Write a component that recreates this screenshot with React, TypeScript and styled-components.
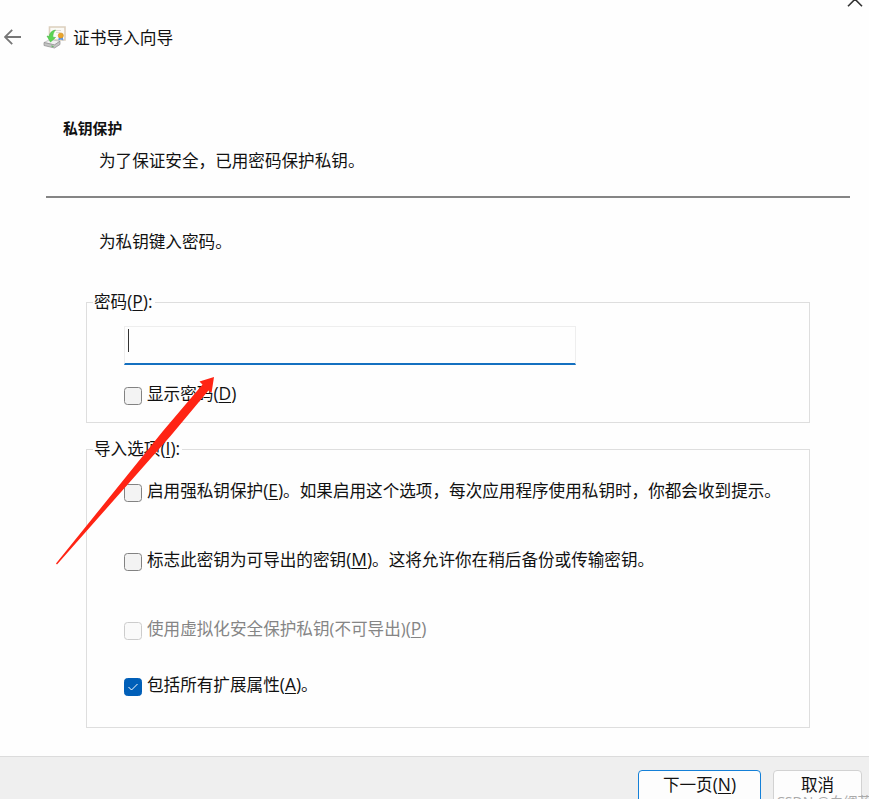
import React from "react";
import styled, { createGlobalStyle, css } from "styled-components";

const Global = createGlobalStyle`
  * { box-sizing: border-box; }
  html, body { margin: 0; overflow: hidden; background: #fff; }
`;

const Dialog = styled.main`
  position: relative;
  display: flex;
  flex-direction: column;
  width: 869px;
  height: 799px;
  overflow: hidden;
  background: #fefefe;
  color: #111;
  font: 16.6px/24px "Open Sans", "Noto Sans CJK SC", sans-serif;
  white-space: nowrap;
`;

const TitleBar = styled.header`
  display: flex;
  align-items: flex-start;
  height: 57px;
`;

const BackIcon = styled.svg`
  width: 18px;
  height: 16px;
  margin: 29px 0 0 4px;
  fill: none;
  stroke: #777;
  stroke-width: 1.8;
`;

const CertIcon = styled.svg`
  width: 24px;
  height: 24px;
  margin: 25px 0 0 21px;
`;

const Title = styled.h1`
  margin: 26px 0 0 6px;
  font-size: 16.7px;
  font-weight: 400;
  line-height: 24px;
`;

const CloseIcon = styled.svg`
  width: 16px;
  height: 8px;
  margin-left: auto;
  margin-right: 6px;
  fill: none;
  stroke: #333;
  stroke-width: 1.6;
`;

const Heading = styled.section`
  height: 141px;
  margin: 0 19px 0 46px;
  padding: 59px 0 0 17px;
  border-bottom: 2px solid #858585;
`;

const HeadingTitle = styled.h2`
  margin: 0;
  font-size: 14.8px;
  font-weight: 700;
  line-height: 24px;
`;

const HeadingText = styled.p`
  margin: 9px 0 0 36px;
`;

const Prompt = styled.p`
  height: 24px;
  margin: 32px 0 0 99px;
`;

const Group = styled.fieldset<{ $height: number; $top: number }>`
  display: flex;
  flex-direction: column;
  align-items: flex-start;
  width: 724px;
  min-width: 0;
  height: ${(p) => p.$height}px;
  margin: ${(p) => p.$top}px 0 0 86px;
  padding: 0 0 0 37px;
  border: 1px solid #dedede;
`;

const Legend = styled.legend`
  height: 24px;
  margin-left: -31px;
  padding: 0 2px 0 1px;
`;

const Mnemonic = styled.span`
  font-size: 17.4px;
  line-height: 1;
`;

const Key = styled.span`
  text-decoration: underline;
  text-decoration-thickness: 1px;
  text-underline-offset: 2px;
`;

const PasswordField = styled.div`
  width: 452px;
  height: 39px;
  margin-top: 12px;
  padding: 2px 0 0 3px;
  border: 1px solid #eee;
  border-bottom: 2px solid #1470c0;
`;

const Caret = styled.span`
  display: block;
  width: 1px;
  height: 23px;
  background: #333;
`;

const Option = styled.label<{ $top: number; $disabled?: boolean }>`
  display: flex;
  align-items: flex-start;
  gap: 5px;
  height: 24px;
  margin-top: ${(p) => p.$top}px;
  color: ${(p) => (p.$disabled ? "#858585" : "#111")};
`;

const Box = styled.span<{ $checked?: boolean; $disabled?: boolean }>`
  display: flex;
  align-items: center;
  justify-content: center;
  flex: none;
  width: 18px;
  height: 18px;
  margin-top: 5px;
  border: 1px solid #828282;
  border-radius: 3.5px;
  background: #f3f3f3;
  ${(p) => p.$disabled && css`
    border-color: #ccc;
    background: #fafafa;
  `}
  ${(p) => p.$checked && css`
    border-color: #005fb8;
    background: #005fb8;
  `}
`;

const Footer = styled.footer`
  display: flex;
  align-items: flex-start;
  justify-content: flex-end;
  gap: 12px;
  height: 43px;
  margin-top: auto;
  padding: 13px 7px 0 0;
  border-top: 1px solid #dcdcdc;
  background: #efefef;
`;

const Button = styled.button<{ $width: number; $primary?: boolean }>`
  flex: none;
  width: ${(p) => p.$width}px;
  height: 34px;
  padding: 0 0 4px;
  border: 1px solid ${(p) => (p.$primary ? "#1480d8" : "#d2d2d2")};
  border-radius: 4px;
  background: #fdfdfd;
  color: #111;
  font: inherit;
`;

const Watermark = styled.span`
  position: absolute;
  left: 776px;
  top: 793px;
  color: #aaa;
  font-size: 14px;
  line-height: 18px;
`;

const Pointer = styled.svg`
  position: absolute;
  left: 50px;
  top: 370px;
  width: 170px;
  height: 200px;
`;

type OptionData = { before: string; letter: string; after?: string; top: number; checked?: boolean; disabled?: boolean };

const importOptions: OptionData[] = [
  { before: "启用强私钥保护", letter: "E", after: "。如果启用这个选项，每次应用程序使用私钥时，你都会收到提示。", top: 18 },
  { before: "标志此密钥为可导出的密钥", letter: "M", after: "。这将允许你在稍后备份或传输密钥。", top: 45 },
  { before: "使用虚拟化安全保护私钥(不可导出)", letter: "P", top: 45, disabled: true },
  { before: "包括所有扩展属性", letter: "A", after: "。", top: 32, checked: true },
];

function AccessKey({ letter, suffix }: { letter: string; suffix?: string }) {
  return <Mnemonic>(<Key>{letter}</Key>){suffix}</Mnemonic>;
}

function CheckOption({ before, letter, after, top, checked, disabled }: OptionData) {
  return (
    <Option $top={top} $disabled={disabled}>
      <Box $checked={checked} $disabled={disabled}>
        {checked && (
          <svg width="12" height="10" viewBox="0 0 12 10" fill="none" stroke="#fff" strokeWidth="1">
            <path d="M1.5 5 4.5 8 10.5 2" />
          </svg>
        )}
      </Box>
      <span>{before}<AccessKey letter={letter} />{after}</span>
    </Option>
  );
}

export default function App() {
  return (
    <Dialog>
      <Global />
      <TitleBar>
        <BackIcon viewBox="0 0 18 16"><path d="M17 8H1M8.2.8 1 8l7.2 7.2" /></BackIcon>
        <CertIcon viewBox="0 0 24 24">
          <path d="M6.500 2h15.500v13H6.500z" fill="#fbfaf6" stroke="#dccfbd" strokeWidth="1.600" />
          <path d="M11 5.500h7M13 7.500h4" stroke="#dedbd2" />
          <path d="m15.800 12-.5 3.500 2.500-1 2.500 1-.5-3.500" fill="#5b98ea" />
          <circle cx="17.800" cy="10.500" r="2.600" fill="#e9a52c" stroke="#c98a22" strokeWidth=".5" />
          <path d="m1 17.500 6-3 10 1.700-5.500 3.700z" fill="#f0f0f0" stroke="#b5b5b5" strokeWidth=".7" />
          <path d="m1 17.500 10.500 2.400 5.500-3.700v3.300L11.500 23 1 20.500z" fill="#c4c4c4" stroke="#8d8d8d" strokeWidth=".7" />
          <path d="m8.500 21 2 .5" stroke="#4ab24a" />
          <path d="M12.500 5C8.500 5.800 6.500 8 6.300 11.500L4 11l3.500 6 5-4.500-2.700-.3C9.800 9.500 10.500 7 12.500 5z" fill="#5bd653" stroke="#43b943" strokeWidth=".6" />
        </CertIcon>
        <Title>证书导入向导</Title>
        <CloseIcon viewBox="0 0 16 8"><path d="M1 6.200 8-.8l7 7" /></CloseIcon>
      </TitleBar>
      <Heading>
        <HeadingTitle>私钥保护</HeadingTitle>
        <HeadingText>为了保证安全，已用密码保护私钥。</HeadingText>
      </Heading>
      <Prompt>为私钥键入密码。</Prompt>
      <Group $height={133} $top={36}>
        <Legend>密码<AccessKey letter="P" suffix=":" /></Legend>
        <PasswordField><Caret /></PasswordField>
        <CheckOption before="显示密码" letter="D" top={17} />
      </Group>
      <Group $height={291} $top={14}>
        <Legend>导入选项<AccessKey letter="I" suffix=":" /></Legend>
        {importOptions.map((option) => <CheckOption key={option.letter} {...option} />)}
      </Group>
      <Footer>
        <Button $width={123} $primary>下一页<AccessKey letter="N" /></Button>
        <Button $width={89}>取消</Button>
      </Footer>
      <Watermark>CSDN @白绸蓝</Watermark>
      <Pointer viewBox="50 370 170 200">
        <path d="M56 563.500 163 431 202.500 384.500 199.500 381.500 214 377 211.500 393 208.500 390.500 170.500 436 57 564.500z" fill="#ff2414" />
      </Pointer>
    </Dialog>
  );
}
